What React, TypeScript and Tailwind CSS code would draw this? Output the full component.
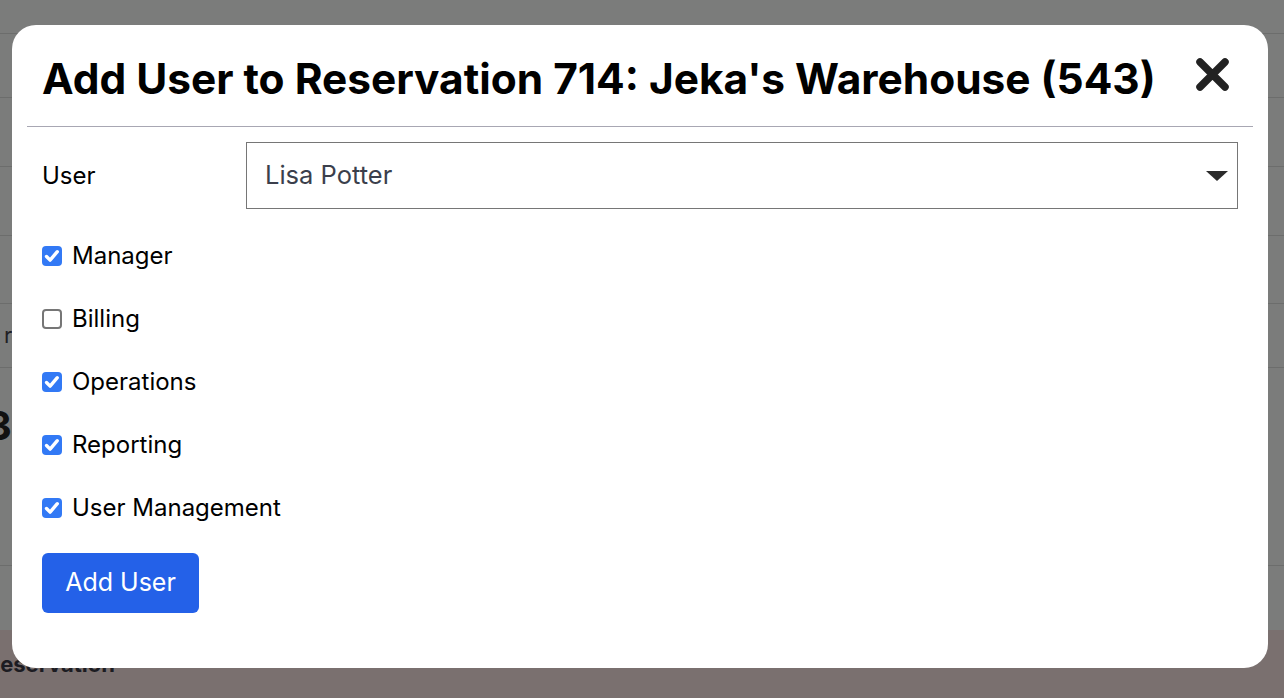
import { useState } from 'react';

const roles = [
  { name: 'Manager', checked: true },
  { name: 'Billing', checked: false },
  { name: 'Operations', checked: true },
  { name: 'Reporting', checked: true },
  { name: 'User Management', checked: true },
];

function Box({ checked }: { checked: boolean }) {
  return checked ? (
    <span className="flex h-5 w-5 items-center justify-center rounded-[4px] bg-[#3279f5]">
      <svg viewBox="0 0 20 20" className="h-5 w-5" fill="none">
        <path d="M4.5 10.5l3.6 3.6 7.2-8.4" stroke="white" strokeWidth="3.4" strokeLinecap="round" strokeLinejoin="round" />
      </svg>
    </span>
  ) : (
    <span className="h-5 w-5 rounded-[4px] border-2 border-[#767676] bg-white" />
  );
}

export default function App() {
  const [checks, setChecks] = useState(roles.map((r) => r.checked));

  return (
    <div className="relative h-[698px] w-[1284px] overflow-hidden bg-[#7b7c7b] font-['Inter',sans-serif]">
      {/* page behind the overlay */}
      <div className="flex flex-col">
        <div className="h-[33px]" />
        <div className="h-[64px] border-t border-[#6c6d6c]" />
        <div className="h-[69px] border-t border-[#6c6d6c]" />
        <div className="h-[69px] border-t border-[#6c6d6c]" />
        <div className="h-[68px] border-t border-[#6c6d6c]" />
        <div className="flex h-[64px] items-center border-t border-[#6c6d6c] text-[22px] text-[#1f2024]">
          <span className="ml-[4px]">r</span>
        </div>
        <div className="h-[198px] border-t border-[#6c6d6c] pt-[28px]">
          <span className="-ml-[14px] text-[40px] font-bold text-[#111]">3</span>
        </div>
        <div className="h-[65px] border-t border-[#6c6d6c]" />
        <div className="h-[68px] bg-[#7a706f] pt-[18px]">
          <span className="-ml-[14px] text-[22px] font-bold text-[#1c1c22]">Reservation</span>
        </div>
      </div>

      {/* modal */}
      <div className="absolute left-[12px] top-[25px] flex h-[643px] w-[1256px] flex-col rounded-[24px] bg-white">
        <div className="mx-[15px] flex items-start justify-between border-b border-[#a8a7b3] pb-[21px] pl-[15px] pr-[23px] pt-[28px]">
          <h2 className="text-[42.4px] font-bold leading-[52px] text-black">
            Add User to Reservation 714: Jeka's Warehouse (543)
          </h2>
          <button className="mt-[4px] h-[35px] w-[35px]">
            <svg viewBox="0 0 35 35" className="h-[35px] w-[35px]">
              <path d="M5 5L30 30M30 5L5 30" stroke="#222" strokeWidth="7.5" strokeLinecap="round" />
            </svg>
          </button>
        </div>

        <div className="flex flex-col px-[30px] pt-[15px]">
          <div className="flex items-center">
            <label className="w-[204px] text-[24px] text-black">User</label>
            <div className="flex h-[67px] flex-1 items-center justify-between border border-[#767676] pl-[18px] pr-[9px]">
              <span className="text-[25.5px] text-[#3b3f4c]">Lisa Potter</span>
              <svg viewBox="0 0 22 10" className="h-[10px] w-[22px]">
                <path d="M0 0h22L11 10z" fill="#2b2b2b" />
              </svg>
            </div>
          </div>

          <div className="mt-[31px] flex flex-col gap-[32px]">
            {roles.map((r, i) => (
              <label
                key={r.name}
                className="flex h-[31px] cursor-pointer items-center gap-[10px] text-[24px] text-black"
                onClick={() => setChecks((c) => c.map((v, j) => (j === i ? !v : v)))}
              >
                <Box checked={checks[i]} />
                {r.name}
              </label>
            ))}
          </div>

          <button className="mt-[30px] h-[60px] w-[157px] rounded-[6px] bg-[#2461e8] text-[25px] text-white">
            Add User
          </button>
        </div>
      </div>
    </div>
  );
}
